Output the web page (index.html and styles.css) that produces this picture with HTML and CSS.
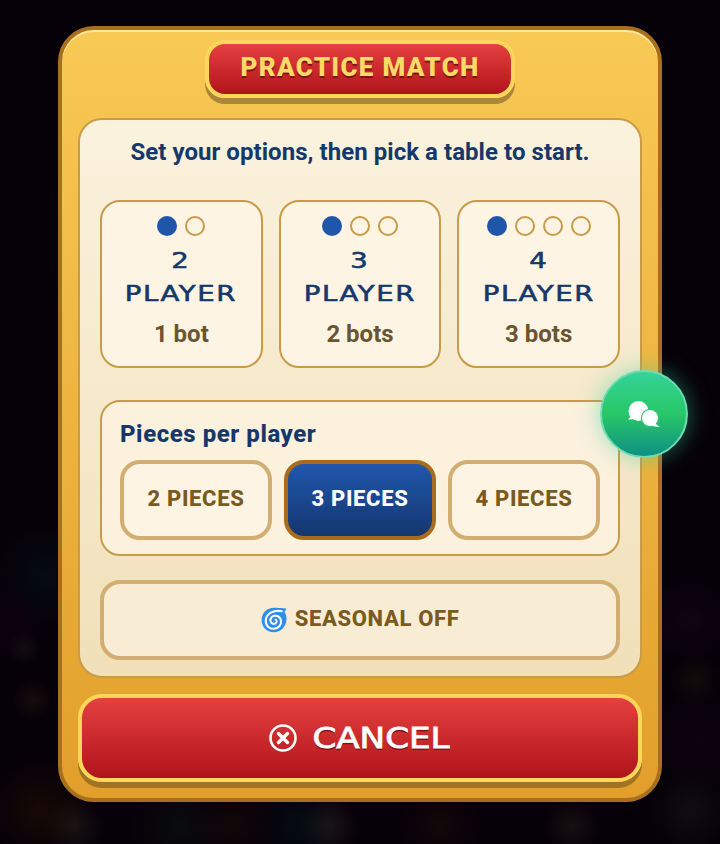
FILE: index.html
```html
<!DOCTYPE html>
<html lang="en">
<head>
<meta charset="UTF-8" />
<meta name="viewport" content="width=device-width, initial-scale=1" />
<title>Practice Match</title>
<link rel="stylesheet" href="styles.css">
</head>
<body>
  <div class="modal">
    <div class="title-row">
      <h1 class="title-badge">PRACTICE MATCH</h1>
    </div>

    <div class="panel">
      <p class="intro">Set your options, then pick a table to start.</p>

      <div class="tables">
        <button class="table-card">
          <span class="dots"><i class="dot on"></i><i class="dot"></i></span>
          <span class="table-name"><span>2</span><span>PLAYER</span></span>
          <span class="bots">1 bot</span>
        </button>
        <button class="table-card">
          <span class="dots"><i class="dot on"></i><i class="dot"></i><i class="dot"></i></span>
          <span class="table-name"><span>3</span><span>PLAYER</span></span>
          <span class="bots">2 bots</span>
        </button>
        <button class="table-card">
          <span class="dots"><i class="dot on"></i><i class="dot"></i><i class="dot"></i><i class="dot"></i></span>
          <span class="table-name"><span>4</span><span>PLAYER</span></span>
          <span class="bots">3 bots</span>
        </button>
      </div>

      <div class="pieces">
        <h2>Pieces per player</h2>
        <div class="pieces-row">
          <button class="option">2 PIECES</button>
          <button class="option selected">3 PIECES</button>
          <button class="option">4 PIECES</button>
        </div>
      </div>

      <button class="option seasonal">
        <svg class="spiral" viewBox="0 0 26 26" width="26" height="26" aria-hidden="true">
          <path d="M13 .8C19.5.8 25.4 1.6 25.4 1.6L23.6 5.2C25 7.200 25.700 9.800 25.500 12.500C25 19.800 19.500 25.300 12.800 25.300C5.800 25.300.6 19.800.6 13C.6 6.200 6 .8 13 .8Z" fill="#2f8ee8"/>
          <path d="M20.800 4.300C13.500 2.500 5.500 6.200 4.800 13.200C4.200 18.800 8.400 22 12.800 21.800C17.500 21.500 20.500 18 20 13.800C19.500 10 16.300 8.200 13.200 8.800C10.300 9.400 8.900 12 9.600 14.400C10.300 16.600 12.800 17.500 14.600 16.300C16 15.300 15.900 13.300 14.500 12.700" fill="none" stroke="#fff" stroke-width="2" stroke-linecap="round"/>
        </svg>
        SEASONAL OFF
      </button>
    </div>

    <button class="cancel">
      <svg viewBox="0 0 28 28" width="28" height="28" aria-hidden="true">
        <circle cx="14" cy="14" r="12.500" fill="none" stroke="#fff" stroke-width="2.600"/>
        <path d="M9.500 9.500l9 9M18.500 9.500l-9 9" fill="none" stroke="#fff" stroke-width="3.400" stroke-linecap="round"/>
      </svg>
      <span class="cancel-text">CANCEL</span>
    </button>

    <button class="chat-fab" aria-label="Chat">
      <svg viewBox="0 0 32 26" width="32" height="26" aria-hidden="true">
        <circle cx="10.500" cy="10" r="10" fill="#fff"/>
        <path d="M3 15L0 18.500C2.500 18.800 5 18.300 7 17Z" fill="#fff"/>
        <circle cx="22" cy="17" r="9.200" fill="#2ec27a"/>
        <circle cx="22" cy="17" r="8" fill="#fff"/>
        <path d="M27 21.500C28 23.500 30 25 32 25.600 29.500 26 26.500 25.800 24 24.500Z" fill="#fff"/>
      </svg>
    </button>
  </div>
</body>
</html>
```

FILE: styles.css
```css
* {
  box-sizing: border-box;
}

html, body {
  height: 100%;
}

body {
  margin: 0;
  padding-top: 26px;
  overflow: hidden;
  font-family: Roboto, 'Liberation Sans', sans-serif;
  background:
    radial-gradient(circle 30px at 75px 826px, rgba(60,56,44,0.3), transparent),
    radial-gradient(circle 30px at 330px 826px, rgba(64,54,42,0.32), transparent),
    radial-gradient(circle 28px at 572px 826px, rgba(60,50,38,0.3), transparent),
    radial-gradient(circle 50px at 180px 826px, rgba(18,36,26,0.3), transparent),
    radial-gradient(circle 40px at 235px 826px, rgba(50,16,8,0.3), transparent),
    radial-gradient(circle 40px at 440px 826px, rgba(50,20,10,0.3), transparent),
    radial-gradient(circle 50px at 300px 826px, rgba(0,34,42,0.3), transparent),
    radial-gradient(circle 40px at 690px 810px, rgba(50,46,50,0.25), transparent),
    radial-gradient(circle 50px at 40px 810px, rgba(56,24,0,0.35), transparent),
    radial-gradient(circle 20px at 33px 700px, rgba(50,38,20,0.35), transparent),
    radial-gradient(circle 16px at 24px 648px, rgba(38,34,30,0.4), transparent),
    radial-gradient(circle 50px at 45px 575px, rgba(0,34,40,0.3), transparent),
    radial-gradient(circle 40px at 5px 620px, rgba(30,0,38,0.3), transparent),
    radial-gradient(circle 40px at 690px 620px, rgba(40,10,48,0.3), transparent),
    radial-gradient(circle 26px at 695px 680px, rgba(50,42,16,0.25), transparent),
    radial-gradient(circle 50px at 700px 740px, rgba(32,8,32,0.3), transparent),
    #060108;
}

button {
  font-family: inherit;
  cursor: pointer;
}

/* Marco principal */
.modal {
  position: relative;
  width: 604px;
  height: 776px;
  margin: 0 auto;
  padding: 10px 16px 16px;
  border: 4px solid #a8701e;
  border-radius: 36px;
  background: linear-gradient(180deg, #f8c954, #e29f2b);
  box-shadow: inset 0 2px 0 rgba(255,240,190,0.75);
}

.title-row {
  display: flex;
  justify-content: center;
  margin-bottom: 20px;
}

.title-badge {
  width: 310px;
  height: 58px;
  margin: 0;
  border: 4px solid #ffd65c;
  border-radius: 20px;
  background: linear-gradient(180deg, #e64040, #b0141a);
  box-shadow: 0 6px 0 #a98638;
  color: #ffd966;
  font-size: 26px;
  font-weight: 900;
  line-height: 46px;
  letter-spacing: 1.3px;
  text-align: center;
  text-shadow: 0 2px 0 #7d1414;
}

/* Panel crema */
.panel {
  height: 560px;
  padding: 18px 20px 16px;
  border: 2px solid #c99a48;
  border-radius: 24px;
  background: linear-gradient(180deg, #fbf2de, #f1e0b9);
}

.intro {
  margin: 0 0 34px;
  color: #15386a;
  font-size: 24px;
  font-weight: 700;
  line-height: 28px;
  letter-spacing: 0.05px;
  text-align: center;
}

.tables {
  display: grid;
  grid-template-columns: repeat(3, 1fr);
  gap: 16px;
  margin-bottom: 32px;
}

.table-card {
  display: flex;
  flex-direction: column;
  align-items: center;
  height: 168px;
  padding: 14px 0 0;
  border: 2px solid #c99a48;
  border-radius: 20px;
  background: #fdf4e3;
}

.dots {
  display: flex;
  gap: 8px;
}

.dot {
  width: 20px;
  height: 20px;
  border: 2px solid #c99a48;
  border-radius: 50%;
}

.dot.on {
  border: none;
  background: #1f55ab;
}

.table-name {
  display: flex;
  flex-direction: column;
  align-items: center;
  margin-top: 8px;
  color: #15386a;
  font-family: 'DejaVu Sans', sans-serif;
  font-size: 22px;
  line-height: 33px;
  letter-spacing: 1.3px;
  transform: scaleX(1.25);
  -webkit-text-stroke: 0.6px #15386a;
}

.bots {
  margin-top: 10px;
  color: #6b5530;
  font-size: 24px;
  font-weight: 700;
  line-height: 28px;
}

/* Piezas */
.pieces {
  height: 156px;
  margin-bottom: 24px;
  padding: 18px 18px 0;
  border: 2px solid #c99a48;
  border-radius: 20px;
  background: #fbf1dd;
}

.pieces h2 {
  margin: 0 0 12px;
  color: #15386a;
  font-size: 24px;
  font-weight: 800;
  line-height: 28px;
  letter-spacing: 0.55px;
}

.pieces-row {
  display: grid;
  grid-template-columns: repeat(3, 1fr);
  gap: 12px;
}

.option {
  height: 80px;
  padding: 0 0 4px;
  border: 4px solid #d2ae72;
  border-radius: 20px;
  background: #fdf4e3;
  color: #7a5a1e;
  font-size: 22px;
  font-weight: 800;
  letter-spacing: 0.65px;
}

.option.selected {
  border-color: #a86c1c;
  background: linear-gradient(180deg, #2057ad, #14366e);
  color: #fff;
}

.seasonal {
  display: flex;
  align-items: center;
  justify-content: center;
  gap: 8px;
  width: 100%;
  background: #f8edd4;
}

.spiral {
  flex: none;
  margin-top: 4px;
}

/* Cancelar */
.cancel {
  display: flex;
  align-items: center;
  justify-content: center;
  gap: 15px;
  width: 100%;
  height: 88px;
  margin-top: 16px;
  padding: 0 2px 0 0;
  border: 4px solid #ffd65c;
  border-radius: 24px;
  background: linear-gradient(180deg, #e64040, #b0141a);
  box-shadow: 0 6px 0 #a07420;
  color: #fff;
}

.cancel-text {
  width: 138px;
  font-family: 'DejaVu Sans', sans-serif;
  font-size: 28px;
  letter-spacing: 0;
  text-align: center;
  text-shadow: 0 2px 0 #7d1414;
  transform: scaleX(1.22);
  -webkit-text-stroke: 0.8px #fff;
}

/* Burbuja flotante */
.chat-fab {
  position: absolute;
  top: 340px;
  right: -30px;
  display: flex;
  align-items: center;
  justify-content: center;
  width: 88px;
  height: 88px;
  padding: 0;
  border: 2px solid #6fdcb4;
  border-radius: 50%;
  background: linear-gradient(180deg, #35d39a, #28c766 50%, #0f8f85);
  box-shadow: 0 0 22px rgba(52,211,153,0.5);
}
```
